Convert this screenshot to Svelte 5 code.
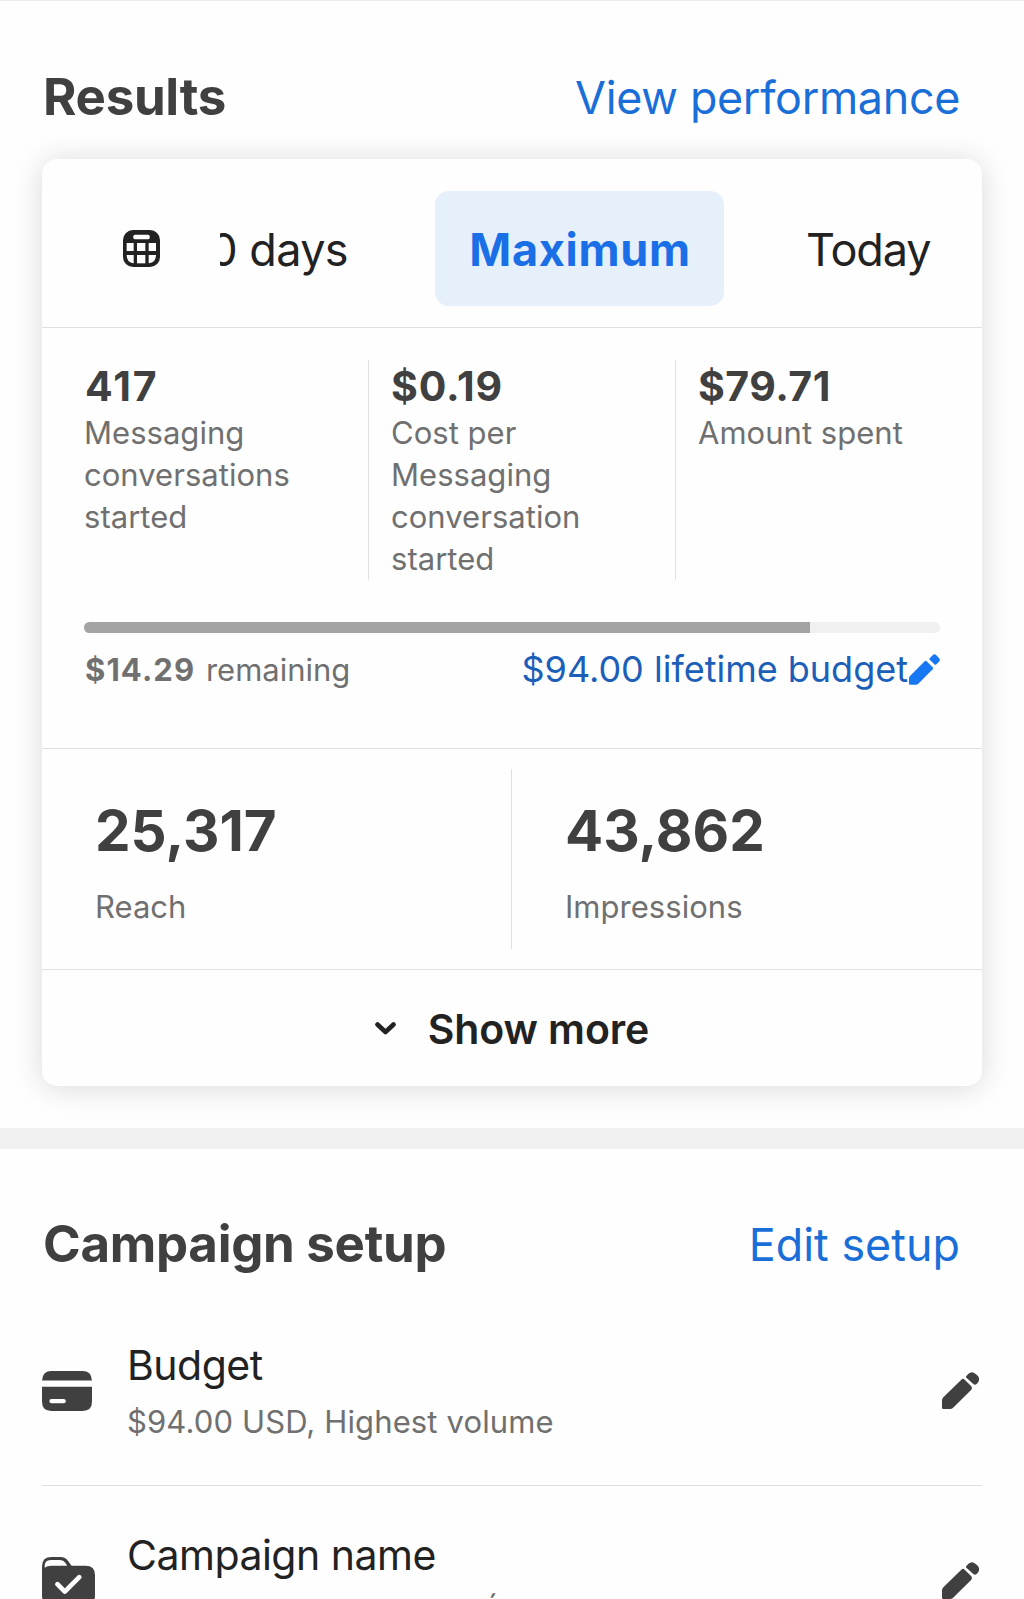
<script>
    const ranges = ["30 days", "Maximum", "Today"];
    let activeRange = "Maximum";

    const metrics = [
        { value: "417", label: "Messaging conversations started" },
        { value: "$0.19", label: "Cost per Messaging conversation started" },
        { value: "$79.71", label: "Amount spent" },
    ];
    const stats = [
        { value: "25,317", label: "Reach" },
        { value: "43,862", label: "Impressions" },
    ];
    const setup = [
        { icon: "card", title: "Budget", detail: "$94.00 USD, Highest volume" },
        { icon: "folder", title: "Campaign name", detail: "Á" },
    ];

    const budget = 94;
    const spent = 79.71;
    $: remaining = (budget - spent).toFixed(2);
    $: progress = (spent / budget) * 100;
</script>

<div class="page">
    <section class="results">
        <header>
            <h2>Results</h2>
            <button class="link">View performance</button>
        </header>

        <div class="card">
            <div class="tabs">
                <button class="calendar" aria-label="Choose dates">
                    <svg width="37" height="37" viewBox="0 0 111 111">
                        <rect width="111" height="111" rx="30" fill="#222" />
                        <g fill="#fff">
                            <rect x="31" y="14" width="49" height="14" rx="5" />
                            <rect x="11" y="39" width="21" height="24" />
                            <rect x="42" y="39" width="25" height="24" />
                            <rect x="77" y="39" width="22" height="24" />
                            <path d="M11 75H32V100Q11 98 11 75Z" />
                            <rect x="42" y="75" width="25" height="25" />
                            <path d="M77 75H99Q99 98 77 100Z" />
                        </g>
                    </svg>
                </button>
                <div class="strip">
                    {#each ranges as range}
                        <button class="tab" class:active={range === activeRange} on:click={() => (activeRange = range)}>
                            {range}
                        </button>
                    {/each}
                </div>
            </div>

            <div class="metrics">
                {#each metrics as metric}
                    <div class="metric">
                        <strong>{metric.value}</strong>
                        <span class="label">{metric.label}</span>
                    </div>
                {/each}
            </div>

            <div class="budget">
                <div class="bar">
                    <div class="fill" style="width: {progress}%"></div>
                </div>
                <div class="budget-row">
                    <span class="remaining"><b>${remaining}</b> remaining</span>
                    <button class="lifetime">
                        ${budget.toFixed(2)} lifetime budget
                        <svg width="31" height="31" viewBox="0 0 93 93" fill="#1877f2">
                            <path d="M3 92Q0 92 0 89V73Q0 69 3 66L47 22Q50 19 53 22L71 40Q74 43 71 46L28 89Q25 92 21 92Z" />
                            <path d="M63 12L71 4Q76-2 82 4L90 12Q95 18 90 23L82 31Q79 34 76 31L62 17Q60 14 63 12Z" />
                        </svg>
                    </button>
                </div>
            </div>

            <div class="stats">
                {#each stats as stat}
                    <div class="stat">
                        <strong>{stat.value}</strong>
                        <span class="label">{stat.label}</span>
                    </div>
                {/each}
            </div>

            <button class="more">
                <svg width="21" height="13" viewBox="0 0 21 13">
                    <path d="M2.5 2.5L10.5 10L18.5 2.5" fill="none" stroke="#222" stroke-width="4.6" stroke-linecap="round" stroke-linejoin="round" />
                </svg>
                Show more
            </button>
        </div>
    </section>

    <section class="setup">
        <header>
            <h2>Campaign setup</h2>
            <button class="link edit">Edit setup</button>
        </header>
        {#each setup as item}
            <div class="row">
                <div class="icon">
                    {#if item.icon === "card"}
                        <svg width="50" height="40" viewBox="0 0 149 119" fill="#404040">
                            <path d="M0 28Q2 0 28 0H121Q147 0 149 28Z" />
                            <path fill-rule="evenodd" d="M0 47H149V91Q149 119 121 119H28Q0 119 0 91ZM28 83Q22 83 22 89.500Q22 96 28 96H65Q71 96 71 89.500Q71 83 65 83Z" />
                        </svg>
                    {:else}
                        <svg width="53" height="48" viewBox="0 0 158 143">
                            <path d="M0 115V28Q0 0 28 0H55Q70 0 79 13L88 26H130Q158 26 158 54V115Q158 143 130 143H28Q0 143 0 115Z" fill="#404040" />
                            <path d="M8 28Q8 9 26 9H54Q64 9 70 18L75 26H28Q14 26 8 32Z" fill="#fff" />
                            <path d="M46 81L68 103L111 60" fill="none" stroke="#fff" stroke-width="14" stroke-linecap="round" stroke-linejoin="round" />
                        </svg>
                    {/if}
                </div>
                <div class="text">
                    <span class="title">{item.title}</span>
                    <span class="label" class:indent={item.icon === "folder"}>{item.detail}</span>
                </div>
                <button aria-label="Edit">
                    <svg width="37" height="37" viewBox="0 0 111 111" fill="#404040">
                        <path d="M4 111Q0 111 0 107V85Q0 80 4 76L58 23Q63 18 68 23L88 43Q92 48 88 53L35 106Q31 111 25 111Z" />
                        <path d="M73 12Q87-7 102 7Q120 20 104 36Q99 41 94 36L73 17Q71 15 73 12Z" />
                    </svg>
                </button>
            </div>
        {/each}
    </section>
</div>

<style>
    :global(body) {
        background: #fefefe;
    }
    .page {
        width: 1024px;
        height: 1599px;
        box-sizing: border-box;
        overflow: hidden;
        border-top: 1px solid #ececec;
        font-family: Inter, "Liberation Sans", sans-serif;
        color: #222;
    }
    button {
        all: unset;
        cursor: pointer;
    }
    svg {
        display: block;
        flex: none;
    }
    header {
        display: flex;
        align-items: center;
        justify-content: space-between;
        height: 80px;
        padding: 0 22px 0 1px;
    }
    h2 {
        margin: 0;
        font-size: 51px;
        font-weight: 700;
        line-height: 80px;
        letter-spacing: -0.3px;
        color: #404040;
    }
    .link {
        padding-top: 1px;
        font-size: 44.8px;
        line-height: 80px;
        letter-spacing: -0.3px;
        color: #1a6ed8;
    }
    .edit {
        letter-spacing: 0.05px;
    }
    .label {
        font-size: 31px;
        line-height: 42px;
        letter-spacing: 0.03px;
        color: #707070;
    }
    .results {
        padding: 56px 42px 42px;
        border-bottom: 21px solid #f0f0f0;
    }
    .card {
        margin-top: 22px;
        height: 927px;
        border-radius: 15px;
        background: #fefefe;
        box-shadow: 0 2px 30px rgba(0, 0, 0, 0.15);
    }
    .tabs {
        display: flex;
        align-items: center;
        box-sizing: border-box;
        height: 169px;
        padding-top: 11px;
        border-bottom: 1px solid #e0e0e0;
    }
    .calendar {
        margin-left: 81px;
    }
    .strip {
        display: flex;
        flex: 1;
        margin-left: 60px;
        overflow: hidden;
    }
    .tab {
        box-sizing: border-box;
        height: 115px;
        padding-top: 2px;
        font-size: 45px;
        line-height: 113px;
        letter-spacing: -0.6px;
        border-radius: 14px;
        white-space: nowrap;
    }
    .tab:first-child {
        display: flex;
        justify-content: flex-end;
        width: 215px;
        padding-right: 87px;
        overflow: hidden;
    }
    .tab:last-child {
        padding-left: 82px;
        letter-spacing: -1.1px;
    }
    .tab.active {
        width: 289px;
        padding-left: 1px;
        text-align: center;
        font-weight: 700;
        letter-spacing: 0.7px;
        color: #1a6fe6;
        background: #e6f0fb;
    }
    .metrics {
        display: grid;
        grid-template-columns: 326px 307px 307px;
        padding-top: 32px;
        height: 220px;
    }
    .metric {
        display: flex;
        flex-direction: column;
        padding: 0 60px 0 22px;
        border-left: 1px solid #e0e0e0;
    }
    .metric:first-child {
        padding-left: 42px;
        border-left: none;
    }
    .metric:last-child {
        padding-right: 0;
    }
    .metric strong {
        padding-top: 1px;
        font-size: 41px;
        line-height: 51px;
        letter-spacing: 0.9px;
        color: #404040;
    }
    .metric:first-child strong {
        padding-left: 1px;
        letter-spacing: 2px;
    }
    .metric:last-child strong {
        letter-spacing: 0.5px;
    }
    .budget {
        padding: 42px 42px 55px;
        border-bottom: 1px solid #e0e0e0;
    }
    .bar {
        height: 11px;
        border-radius: 6px;
        background: #f0f0f0;
        overflow: hidden;
    }
    .fill {
        height: 100%;
        background: #a4a4a4;
    }
    .budget-row {
        display: flex;
        align-items: center;
        justify-content: space-between;
        height: 48px;
        margin-top: 12px;
    }
    .remaining {
        padding-left: 1px;
        font-size: 31px;
        color: #707070;
    }
    .remaining b {
        margin-right: 2px;
        letter-spacing: 1.1px;
    }
    .lifetime {
        display: flex;
        align-items: center;
        gap: 1px;
        font-size: 36px;
        color: #1c5fb9;
    }
    .stats {
        display: grid;
        grid-template-columns: 469px 1fr;
        height: 180px;
        padding: 20px 0;
        border-bottom: 1px solid #e0e0e0;
    }
    .stat {
        display: flex;
        flex-direction: column;
        gap: 20px;
        padding: 27px 0 0 53px;
    }
    .stat + .stat {
        border-left: 1px solid #e0e0e0;
    }
    .stat strong {
        font-size: 56.5px;
        line-height: 70px;
        color: #404040;
    }
    .more {
        display: flex;
        align-items: center;
        justify-content: center;
        gap: 32px;
        width: 100%;
        height: 117px;
        font-size: 41px;
        font-weight: 600;
        letter-spacing: -0.1px;
    }
    .setup {
        padding: 55px 42px 0;
    }
    .setup header {
        margin-bottom: 12px;
    }
    .row {
        display: flex;
        align-items: center;
        padding: 43px 3px 42px 0;
        border-bottom: 1px solid #e0e0e0;
    }
    .row svg {
        margin-top: -1px;
    }
    .icon {
        width: 53px;
        margin-right: 32px;
    }
    .text {
        display: flex;
        flex: 1;
        flex-direction: column;
        gap: 10px;
    }
    .title {
        font-size: 41px;
        line-height: 52px;
        letter-spacing: -0.5px;
    }
    .text .label {
        letter-spacing: 0.13px;
    }
    .text .indent {
        padding-left: 354px;
    }
</style>
